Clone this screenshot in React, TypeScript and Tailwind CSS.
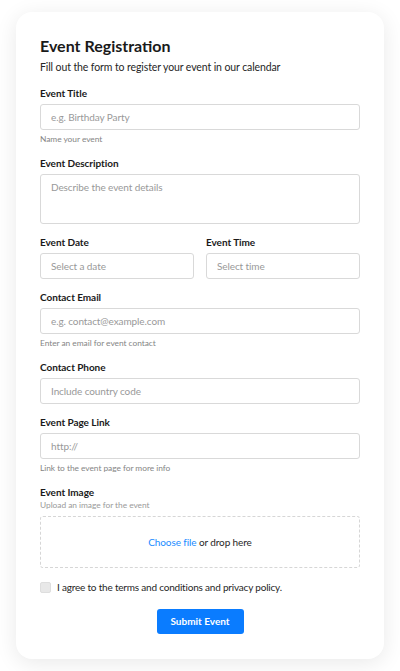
import React from "react";

const font = { fontFamily: 'Lato, "Noto Sans", sans-serif' };

function Field({
  label,
  placeholder,
  helper,
}: {
  label: string;
  placeholder: string;
  helper?: string;
}) {
  return (
    <div className="mb-[11px]">
      <label className="block text-[10px] leading-[14px] font-bold tracking-[-0.005em] text-[#1a1a1a] mb-[4px]">
        {label}
      </label>
      <input
        placeholder={placeholder}
        className="block w-full h-[26px] px-[10px] text-[10px] tracking-[-0.01em] text-[#222] placeholder:text-[#999] border border-[#d9d9d9] rounded-[3px] outline-none bg-white"
      />
      {helper && (
        <p className="mt-[3px] text-[8.4px] leading-[12px] tracking-[-0.005em] text-[#858585]">
          {helper}
        </p>
      )}
    </div>
  );
}

export default function App() {
  return (
    <div className="min-h-screen bg-white px-4 pt-3 pb-3" style={font}>
      <div className="bg-white rounded-2xl shadow-[0_4px_22px_rgba(0,0,0,0.09)] px-6 pt-6 pb-[25px]">
        <h1 className="text-[16px] leading-[20px] font-bold text-[#1a1a1a]">
          Event Registration
        </h1>
        <p className="mt-[4px] mb-[11px] text-[10.5px] leading-[15px] tracking-[-0.01em] text-[#262626]">
          Fill out the form to register your event in our calendar
        </p>

        <Field label="Event Title" placeholder="e.g. Birthday Party" helper="Name your event" />

        <div className="mb-[11px]">
          <label className="block text-[10px] leading-[14px] font-bold tracking-[-0.005em] text-[#1a1a1a] mb-[4px]">
            Event Description
          </label>
          <textarea
            placeholder="Describe the event details"
            className="block w-full h-[50px] px-[10px] py-[5px] text-[10px] leading-[14px] tracking-[-0.01em] resize-none placeholder:text-[#999] border border-[#d9d9d9] rounded-[3px] outline-none"
          />
        </div>

        <div className="grid grid-cols-2 gap-x-3">
          <Field label="Event Date" placeholder="Select a date" />
          <Field label="Event Time" placeholder="Select time" />
        </div>

        <Field
          label="Contact Email"
          placeholder="e.g. contact@example.com"
          helper="Enter an email for event contact"
        />
        <Field label="Contact Phone" placeholder="Include country code" />
        <Field
          label="Event Page Link"
          placeholder="http://"
          helper="Link to the event page for more info"
        />

        <div className="mb-[12px]">
          <label className="block text-[10px] leading-[14px] font-bold tracking-[-0.005em] text-[#1a1a1a]">
            Event Image
          </label>
          <p className="text-[8.4px] leading-[12px] tracking-[-0.005em] text-[#9a9a9a]">
            Upload an image for the event
          </p>
          <div className="mt-[5px] h-[52px] border border-dashed border-[#d6d6d6] rounded-[3px] flex items-center justify-center text-[10px] tracking-[-0.01em] text-[#262626]">
            <span className="text-[#1a8cff]">Choose file</span>
            <span>&nbsp;or drop here</span>
          </div>
        </div>

        <label className="flex items-center h-[14px] gap-[6px] text-[10px] tracking-[-0.02em] text-[#262626]">
          <span className="w-[11px] h-[11px] rounded-[2px] bg-[#e8e8e8] border border-[#dedede]" />
          I agree to the terms and conditions and privacy policy.
        </label>

        <div className="flex justify-center mt-[15px]">
          <button className="h-[25px] w-[87px] rounded-[3px] bg-[#0a7cff] text-white text-[10px] font-bold">
            Submit Event
          </button>
        </div>
      </div>
    </div>
  );
}
